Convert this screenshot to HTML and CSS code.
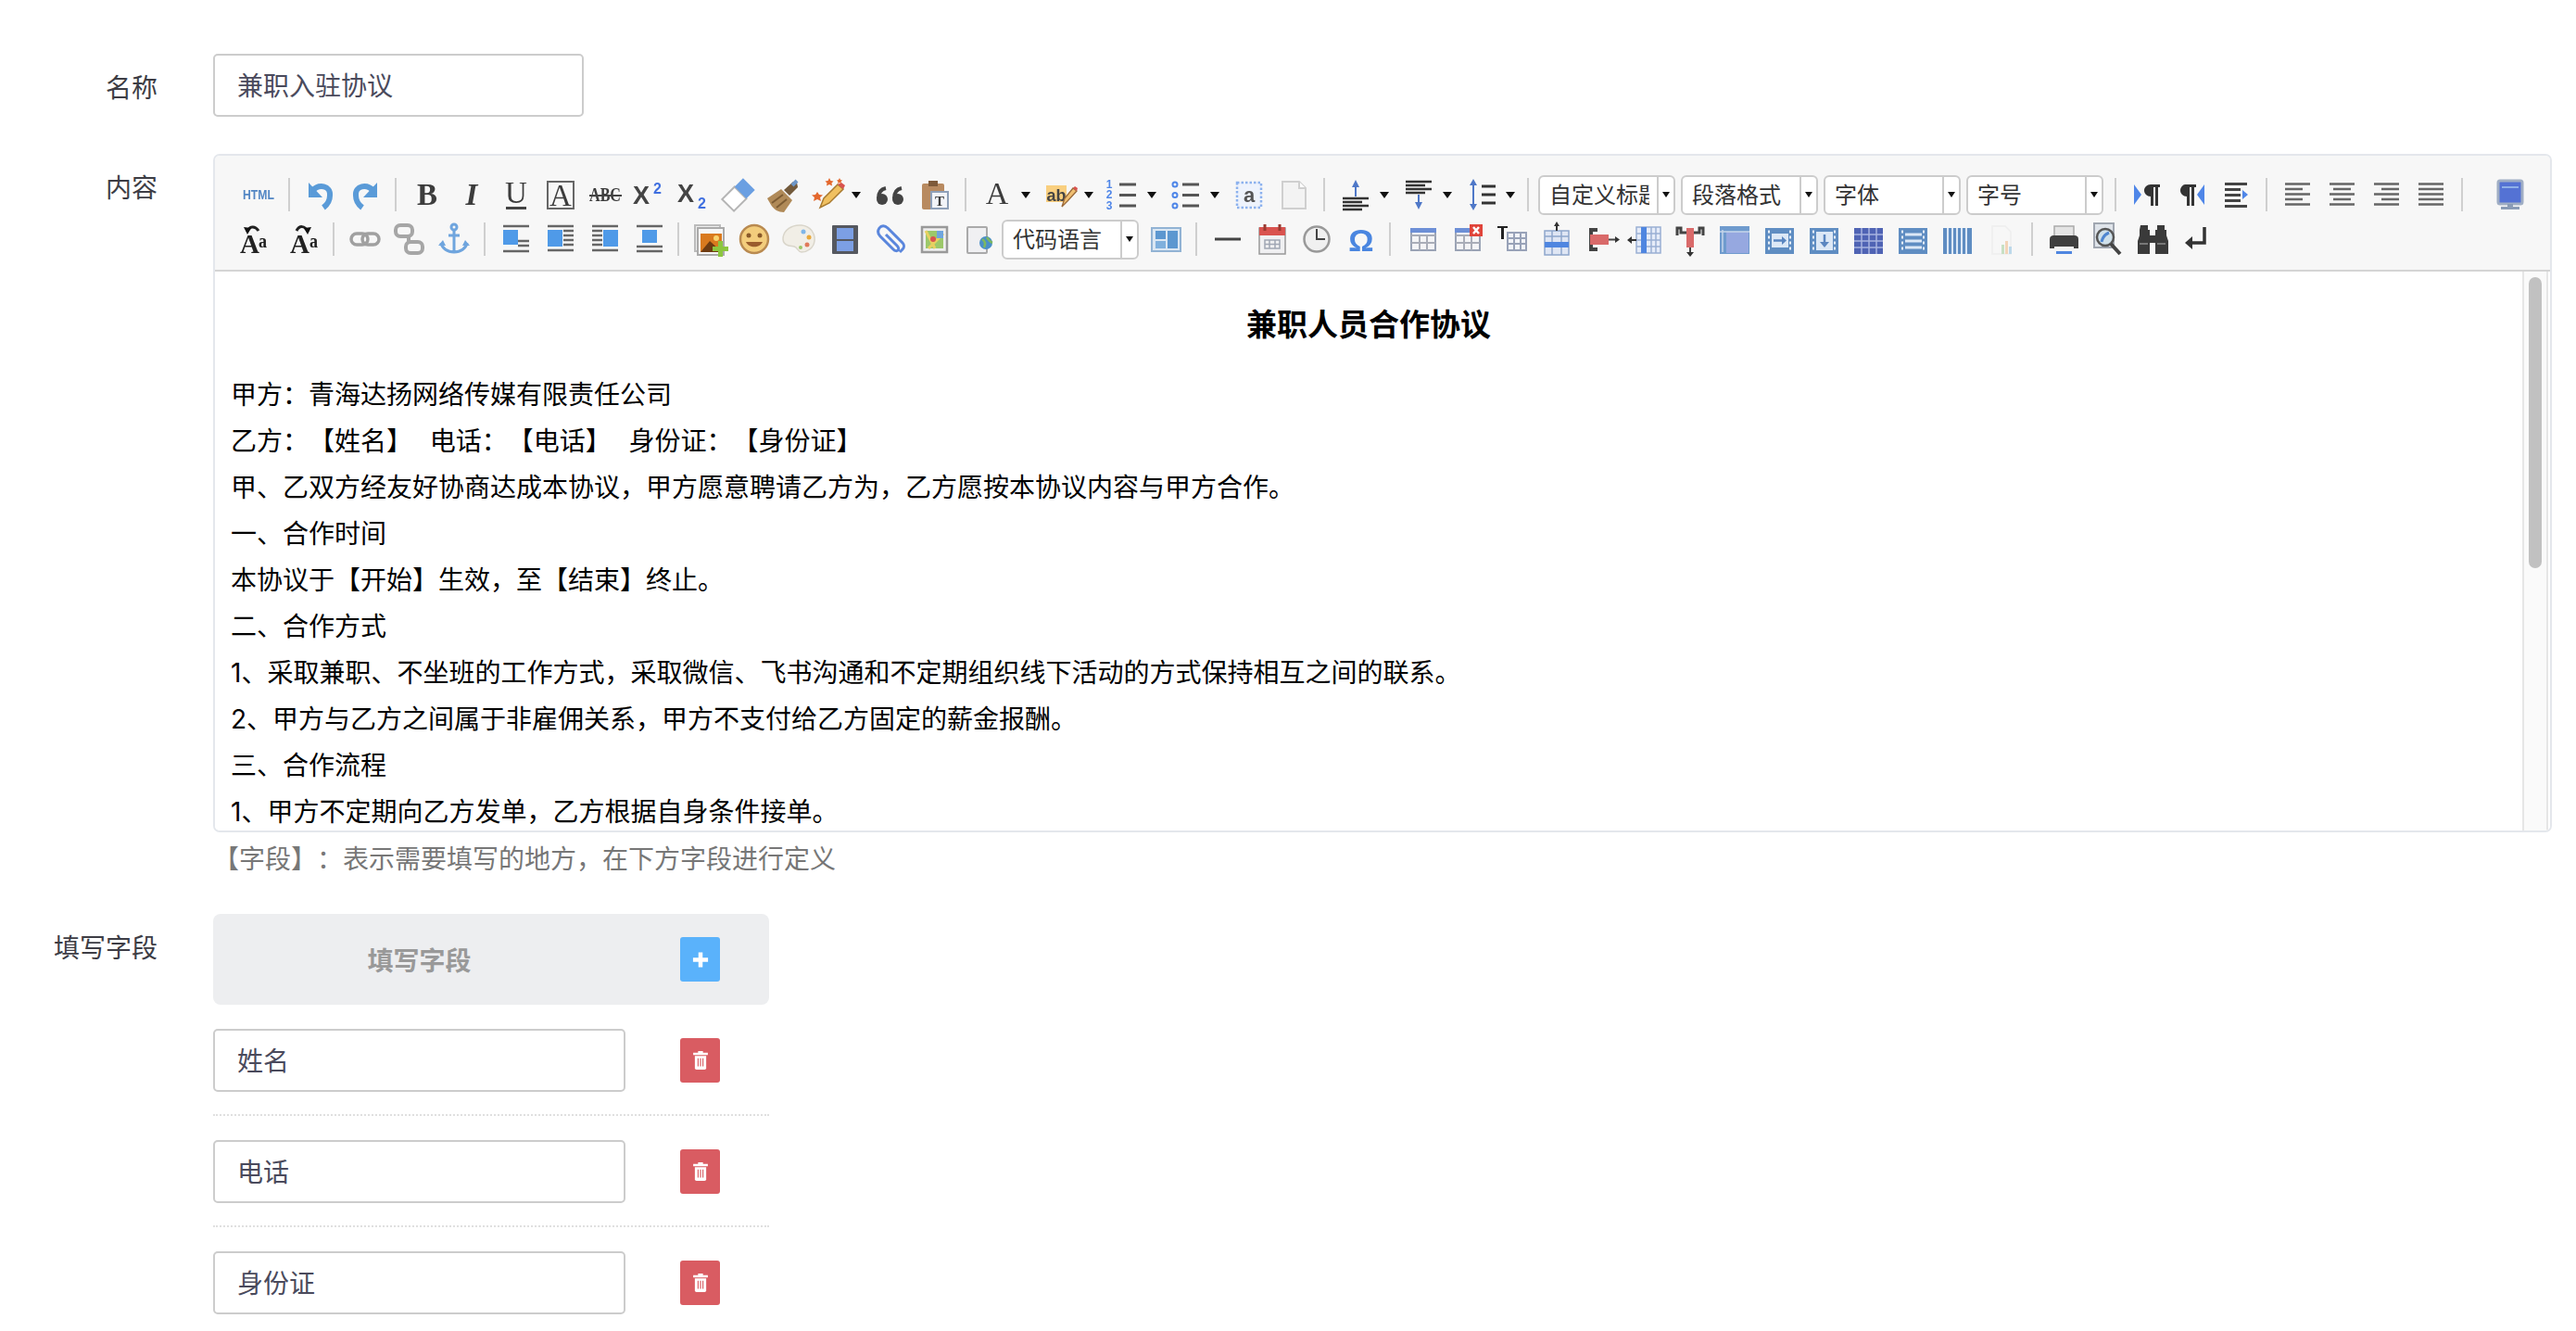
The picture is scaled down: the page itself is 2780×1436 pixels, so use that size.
FILE: index.html
```html
<!DOCTYPE html>
<html lang="zh-CN">
<head>
<meta charset="utf-8">
<title>兼职入驻协议</title>
<link rel="stylesheet" href="styles.css">
</head>
<body>
<svg class="defs" aria-hidden="true">
  <symbol id="grid" viewBox="0 0 48 48">
    <rect x="11" y="13" width="26" height="23" fill="#f4f4f6" stroke="#9aa3b5" stroke-width="2"/>
    <path d="M11 20h26M11 28h26M20 20v16M28 20v16" stroke="#a9adb8" stroke-width="2" fill="none"/>
    <rect x="10" y="12" width="28" height="5" fill="#6d8fd6"/>
  </symbol>
  <symbol id="frame" viewBox="0 0 48 48">
    <rect x="9" y="12" width="31" height="28" fill="#5f8dc2"/>
    <path d="M12 16h2M12 22h2M12 28h2M12 34h2M35 16h2M35 22h2M35 28h2M35 34h2" stroke="#e8f0f8" stroke-width="3"/>
  </symbol>
</svg>
<main class="form">
  <section class="field name-field">
    <div class="label">名称</div>
    <div class="control"><div class="input name-input">兼职入驻协议</div></div>
  </section>

  <section class="field editor-field">
    <div class="label">内容</div>
    <div class="control">
      <div class="editor">
        <div class="toolbar">
          <div class="row">
            <span class="b"><svg class="i" viewBox="0 0 48 48"><text x="7" y="29" class="t-html" textLength="34" lengthAdjust="spacingAndGlyphs">HTML</text></svg></span>
            <span class="s"></span>
            <span class="b"><svg class="i" viewBox="0 0 48 48"><path d="M15 20C22 12 35 14 34 25c0 5-3 10-7 13" fill="none" stroke="#5a9bd8" stroke-width="6"/><path d="M11 11v16h15z" fill="#5a9bd8"/></svg></span>
            <span class="b"><svg class="i" viewBox="0 0 48 48"><path d="M33 20C26 12 13 14 14 25c0 5 3 10 7 13" fill="none" stroke="#5a9bd8" stroke-width="6"/><path d="M37 11v16H22z" fill="#5a9bd8"/></svg></span>
            <span class="s"></span>
            <span class="b"><svg class="i" viewBox="0 0 48 48"><text x="24" y="35" class="t-serif bold fs30">B</text></svg></span>
            <span class="b"><svg class="i" viewBox="0 0 48 48"><text x="24" y="35" class="t-serif bold ital fs30">I</text></svg></span>
            <span class="b"><svg class="i" viewBox="0 0 48 48"><text x="24" y="33" class="t-serif fs30">U</text><rect x="13" y="37" width="22" height="3" fill="#444"/></svg></span>
            <span class="b"><svg class="i" viewBox="0 0 48 48"><rect x="10" y="10" width="28" height="29" fill="none" stroke="#666" stroke-width="2"/><text x="24" y="36" class="t-serif fs30">A</text></svg></span>
            <span class="b"><svg class="i" viewBox="0 0 48 48"><text x="24" y="31" class="t-serif bold fs21" textLength="34" lengthAdjust="spacingAndGlyphs">ABC</text><rect x="7" y="24" width="35" height="2" fill="#444"/></svg></span>
            <span class="b"><svg class="i" viewBox="0 0 48 48"><text x="6" y="34" class="t-x">X</text><text x="28" y="23" class="t-sup">2</text></svg></span>
            <span class="b"><svg class="i" viewBox="0 0 48 48"><text x="6" y="32" class="t-x">X</text><text x="28" y="39" class="t-sup">2</text></svg></span>
            <span class="b"><svg class="i" viewBox="0 0 48 48"><g transform="rotate(-45 24 24)"><rect x="8" y="15" width="19" height="18" fill="#fff" stroke="#b5b5b5" stroke-width="2"/><rect x="27" y="15" width="13" height="18" fill="#6a9fe2"/></g></svg></span>
            <span class="b"><svg class="i" viewBox="0 0 48 48"><path d="M7 28l15-10 12 12-9 13c-6 0-11-3-14-8z" fill="#b08a58"/><path d="M12 33l12-9M17 38l11-9" stroke="#7d5c33" stroke-width="2"/><path d="M25 19l6 6 9-9-1-5-4-1z" fill="#735a3c"/><path d="M34 14l5-5" stroke="#6d96c8" stroke-width="4"/></svg></span>
            <span class="b split"><svg class="i" viewBox="0 0 48 48"><path d="M16 38l4-10 15-15 6 5-15 15z" fill="#f0c060" stroke="#a87a30" stroke-width="1.5"/><path d="M35 13l6 5 2-4-4-3z" fill="#d9534f"/><path d="M13 21l2 3 4 .5-3 2.500 1 4-4-2-4 2 1-4-3-2.500 4-.5zM26 6l1.500 3 3 .5-2 2 .5 3-3-1.500-3 1.500.5-3-2-2 3-.5zM37 6l1 2 2 .5-1.500 1.500.5 2-2-1-2 1 .5-2L34 8.500l2-.5z" fill="#e4682e"/></svg><i class="caret"></i></span>
            <span class="b"><svg class="i" viewBox="0 0 48 48"><g fill="#444"><circle cx="15" cy="29" r="6"/><circle cx="32" cy="29" r="6"/></g><path d="M11 28c0-6 3-10 8-11M28 28c0-6 3-10 8-11" fill="none" stroke="#444" stroke-width="4"/></svg></span>
            <span class="b"><svg class="i" viewBox="0 0 48 48"><rect x="10" y="12" width="24" height="28" rx="2" fill="#b88a60"/><rect x="17" y="9" width="10" height="6" fill="#7e5a3a"/><rect x="20" y="21" width="18" height="18" fill="#f2f4f8" stroke="#8fa0b8" stroke-width="2"/><text x="29" y="36" class="t-serif bold fs15">T</text></svg></span>
            <span class="s"></span>
            <span class="b split"><svg class="i" viewBox="0 0 48 48"><text x="24" y="34" class="t-serif fs32">A</text></svg><i class="caret"></i></span>
            <span class="b split"><svg class="i" viewBox="0 0 48 48"><rect x="9" y="14" width="22" height="18" fill="#f9cf7f"/><text x="20" y="31" class="t-ab" textLength="21" lengthAdjust="spacingAndGlyphs">ab</text><path d="M26 37l3-9 9-11 4 3-10 11z" fill="#f0bf72" stroke="#9a6a3a" stroke-width="1.300"/><path d="M38 17l4 3 1-3-3-2z" fill="#d9534f"/></svg><i class="caret"></i></span>
            <span class="b split"><svg class="i" viewBox="0 0 48 48"><text x="9" y="17" class="t-num">1</text><text x="9" y="28" class="t-num">2</text><text x="9" y="40" class="t-num">3</text><path d="M20 13h18M20 24.500h18M20 36h18" stroke="#555" stroke-width="3"/></svg><i class="caret"></i></span>
            <span class="b split"><svg class="i" viewBox="0 0 48 48"><g fill="none" stroke="#4f86e8" stroke-width="2"><circle cx="12" cy="13" r="2.500"/><circle cx="12" cy="24.500" r="2.500"/><circle cx="12" cy="36" r="2.500"/></g><path d="M20 13h18M20 24.500h18M20 36h18" stroke="#555" stroke-width="3"/></svg><i class="caret"></i></span>
            <span class="b"><svg class="i" viewBox="0 0 48 48"><rect x="11" y="11" width="26" height="27" fill="#eef3fc" stroke="#8db2ee" stroke-width="2.500" stroke-dasharray="2.500 2"/><text x="24" y="32" class="t-a">a</text></svg></span>
            <span class="b"><svg class="i" viewBox="0 0 48 48"><path d="M12 10h18l7 7v22H12z" fill="#f3f3f3" stroke="#cfcfcf" stroke-width="2"/><path d="M30 10v7h7" fill="#fff" stroke="#cfcfcf" stroke-width="2"/></svg></span>
            <span class="s"></span>
            <span class="b split"><svg class="i" viewBox="0 0 48 48"><path d="M24 8l-4 8h3v10h2V16h3z" fill="#4f78c8"/><path d="M10 28h28M10 32h21M10 36h28M10 40h21" stroke="#333" stroke-width="2.500"/></svg><i class="caret"></i></span>
            <span class="b split"><svg class="i" viewBox="0 0 48 48"><path d="M10 10h28M10 14h21M10 18h28M10 22h21" stroke="#333" stroke-width="2.500"/><path d="M24 40l-4-8h3V24h2v8h3z" fill="#4f78c8"/></svg><i class="caret"></i></span>
            <span class="b split"><svg class="i" viewBox="0 0 48 48"><path d="M15 7l-4 7h3v10h2V14h3zM15 41l-4-7h3V24h2v10h3z" fill="#4f78c8"/><path d="M24 15h15M24 24h15M24 33h15" stroke="#333" stroke-width="3"/></svg><i class="caret"></i></span>
            <span class="s pull3"></span>
            <span class="sel first"><span class="sel-t">自定义标题</span><span class="sel-c"><i class="caret"></i></span></span>
            <span class="sel"><span class="sel-t">段落格式</span><span class="sel-c"><i class="caret"></i></span></span>
            <span class="sel"><span class="sel-t">字体</span><span class="sel-c"><i class="caret"></i></span></span>
            <span class="sel"><span class="sel-t">字号</span><span class="sel-c"><i class="caret"></i></span></span>
            <span class="s pull"></span>
            <span class="b"><svg class="i" viewBox="0 0 48 48"><path d="M10 13l8 11-8 11z" fill="#4f86e8"/><path d="M25 13h13v3h-2v20h-3V16h-2v20h-3V26c-4 0-7-3-7-6.500s3-6.500 7-6.500z" fill="#333"/></svg></span>
            <span class="b"><svg class="i" viewBox="0 0 48 48"><path d="M38 13l-8 11 8 11z" fill="#4f86e8"/><path d="M17 13h12v3h-2v20h-3V16h-2v20h-3V26c-4 0-7-3-7-6.500s3-6.500 5-6.500z" fill="#333"/></svg></span>
            <span class="b"><svg class="i" viewBox="0 0 48 48"><path d="M12 11h24v3H12zM12 17h17v3H12zM12 23h17v3H12zM12 29h17v3H12zM12 35h24v3H12z" fill="#444"/><path d="M31 19l6 5-6 5z" fill="#4f86e8"/></svg></span>
            <span class="s"></span>
            <span class="b"><svg class="i" viewBox="0 0 48 48"><path d="M10 12.500h27M10 18h19M10 23.500h27M10 29h19M10 34.500h27" class="al"/></svg></span>
            <span class="b"><svg class="i" viewBox="0 0 48 48"><path d="M10 12.500h27M14 18h19M10 23.500h27M14 29h19M10 34.500h27" class="al"/></svg></span>
            <span class="b"><svg class="i" viewBox="0 0 48 48"><path d="M10 12.500h27M18 18h19M10 23.500h27M18 29h19M10 34.500h27" class="al"/></svg></span>
            <span class="b"><svg class="i" viewBox="0 0 48 48"><path d="M10 12.500h27M10 18h27M10 23.500h27M10 29h27M10 34.500h27" class="al"/></svg></span>
            <span class="s"></span>
            <span class="b push"><svg class="i" viewBox="0 0 48 48"><rect x="11" y="9" width="26" height="25" rx="2" fill="#5472d4" stroke="#a0aec4" stroke-width="3"/><path d="M15 16h18" stroke="#8fb0e8" stroke-width="2"/><path d="M21 34h6v3h-6zM14 37h20v3H14z" fill="#8a9cb6"/></svg></span>
          </div>
          <div class="row">
            <span class="b"><svg class="i" viewBox="0 0 48 48"><text x="4" y="39" class="t-serif bold fs29 st">A</text><text x="24" y="33" class="t-serif bold fs18 st" textLength="9" lengthAdjust="spacingAndGlyphs">a</text><path d="M12 16c2-6 8-7 12-1" fill="none" stroke="#222" stroke-width="3"/><path d="M8 11l8 1-4 7z" fill="#111"/></svg></span>
            <span class="b"><svg class="i" viewBox="0 0 48 48"><text x="10" y="39" class="t-serif bold fs29 st">A</text><text x="31" y="33" class="t-serif bold fs18 st" textLength="9" lengthAdjust="spacingAndGlyphs">a</text><path d="M17 15c3-6 9-6 12 1" fill="none" stroke="#222" stroke-width="3"/><path d="M33 11l-8 1 4 7z" fill="#111"/></svg></span>
            <span class="s"></span>
            <span class="b"><svg class="i" viewBox="0 0 48 48"><g fill="none" stroke="#a0a0a0" stroke-width="3.500"><rect x="9" y="18" width="18" height="12" rx="6"/><rect x="21" y="18" width="18" height="12" rx="6"/></g></svg></span>
            <span class="b"><svg class="i" viewBox="0 0 48 48"><g fill="none" stroke="#a6a6a6" stroke-width="4"><rect x="9" y="9" width="18" height="12" rx="5"/><rect x="20" y="27" width="18" height="12" rx="5"/><path d="M23 21v6"/></g></svg></span>
            <span class="b"><svg class="i" viewBox="0 0 48 48"><g fill="none" stroke="#6fa5de" stroke-width="3"><circle cx="24" cy="11" r="3"/><path d="M24 14v24M18 20h12M10 28c1 6 7 10 14 10s13-4 14-10"/></g><path d="M7 31l5-6 3 6zM41 31l-5-6-3 6z" fill="#6fa5de"/></svg></span>
            <span class="s"></span>
            <span class="b"><svg class="i" viewBox="0 0 48 48"><path d="M10 10h28M26 26h12M26 31h12M10 37h28" class="ln"/><rect x="10" y="14" width="16" height="16" fill="#4f9ae8"/></svg></span>
            <span class="b"><svg class="i" viewBox="0 0 48 48"><path d="M10 10h28M27 15h11M27 20h11M27 25h11M27 30h11M10 36h28" class="ln"/><rect x="10" y="14" width="16" height="18" fill="#4f9ae8"/></svg></span>
            <span class="b"><svg class="i" viewBox="0 0 48 48"><path d="M10 10h28M10 15h11M10 20h11M10 25h11M10 30h11M10 36h28" class="ln"/><rect x="22" y="14" width="16" height="18" fill="#4f9ae8"/></svg></span>
            <span class="b"><svg class="i" viewBox="0 0 48 48"><path d="M10 10h28M10 32h28M10 37h28" class="ln"/><rect x="16" y="14" width="16" height="14" fill="#4f9ae8"/></svg></span>
            <span class="s pull"></span>
            <span class="b"><svg class="i" viewBox="0 0 48 48"><rect x="8" y="9" width="27" height="28" fill="#eee" stroke="#bbb" stroke-width="2"/><rect x="11" y="12" width="28" height="29" fill="#f6f6f6" stroke="#aaa" stroke-width="2"/><rect x="14" y="18" width="23" height="20" fill="#d97a1e"/><path d="M14 38l10-12 13 12z" fill="#6e3c12"/><circle cx="31" cy="23" r="3" fill="#f8d36e"/><path d="M36 28h5v6h6v5h-6v6h-5v-6h-6v-5h6z" fill="#8cc63f" transform="translate(-3 -2)"/></svg></span>
            <span class="b"><svg class="i" viewBox="0 0 48 48"><circle cx="24" cy="24" r="15" fill="#f3cd7c" stroke="#b98a50" stroke-width="2.500"/><circle cx="18" cy="20" r="2.500" fill="#8a5a2a"/><circle cx="30" cy="20" r="2.500" fill="#8a5a2a"/><path d="M15 27c3 7 15 7 18 0z" fill="#9a5c2c"/></svg></span>
            <span class="b"><svg class="i" viewBox="0 0 48 48"><path d="M7 24c0-10 10-16 20-15s15 9 14 17-8 12-14 12c-3 0-4-3-6-5s-5-1-8-2-6-3-6-7z" fill="#f1eee6" stroke="#d9d5ca" stroke-width="1.500"/><circle cx="29" cy="16" r="2.500" fill="#7fb6e8"/><circle cx="35" cy="22" r="2.500" fill="#e9a83a"/><circle cx="33" cy="30" r="2.500" fill="#e07a5a"/><circle cx="26" cy="33" r="2" fill="#9cc86a"/></svg></span>
            <span class="b gap2"><svg class="i" viewBox="0 0 48 48"><rect x="10" y="9" width="28" height="31" rx="1" fill="#55585f"/><rect x="15" y="12" width="18" height="12" fill="#7c9fe4"/><rect x="15" y="26" width="18" height="11" fill="#7c9fe4"/></svg></span>
            <span class="b"><svg class="i" viewBox="0 0 48 48"><path d="M35 38l3-3c2-2 2-5 0-7L22 12c-3-3-7-3-9 0s-2 6 1 9l14 14c2 2 4 2 5 1s1-3-1-5L20 19" fill="none" stroke="#5a86dc" stroke-width="3"/></svg></span>
            <span class="b"><svg class="i" viewBox="0 0 48 48"><rect x="11" y="11" width="27" height="27" fill="#eee" stroke="#999" stroke-width="2.500"/><rect x="15" y="15" width="19" height="19" fill="#9cc86a"/><path d="M15 15l10 19M34 18L18 34" stroke="#e8d060" stroke-width="3"/><rect x="27" y="15" width="7" height="8" fill="#6fa5de"/><circle cx="23" cy="24" r="3" fill="#d9534f"/></svg></span>
            <span class="b"><svg class="i" viewBox="0 0 48 48"><rect x="12" y="11" width="21" height="28" rx="1" fill="#f0f0f2" stroke="#aaa" stroke-width="2"/><circle cx="32" cy="28" r="7" fill="#4a8fc8"/><path d="M28 24c3 2 4 5 2 9M33 22c2 3 3 5 6 6" stroke="#7cb860" stroke-width="2.500" fill="none"/></svg></span>
            <span class="sel code"><span class="sel-t">代码语言</span><span class="sel-c"><i class="caret"></i></span></span>
            <span class="b gap5"><svg class="i" viewBox="0 0 48 48"><rect x="9" y="12" width="31" height="25" fill="#dbe7f3" stroke="#92b3d4" stroke-width="2"/><rect x="13" y="15" width="11" height="9" fill="#5c97d0"/><rect x="13" y="26" width="11" height="8" fill="#7fb0dd"/><rect x="26" y="15" width="11" height="19" fill="#5c97d0"/></svg></span>
            <span class="s"></span>
            <span class="b"><svg class="i" viewBox="0 0 48 48"><path d="M10 24h28" stroke="#444" stroke-width="3"/></svg></span>
            <span class="b"><svg class="i" viewBox="0 0 48 48"><rect x="10" y="12" width="28" height="28" fill="#f0f0f2" stroke="#999" stroke-width="1.500"/><rect x="10" y="11" width="28" height="9" fill="#d9534f"/><path d="M16 8v7M32 8v7" stroke="#9a3a30" stroke-width="3"/><path d="M16 25h16v9H16zM16 29.500h16M21 25v9M27 25v9" stroke="#a0a6b4" stroke-width="1.500" fill="none"/></svg></span>
            <span class="b"><svg class="i" viewBox="0 0 48 48"><circle cx="24" cy="24" r="13.500" fill="#f0f0f0" stroke="#999" stroke-width="2.500"/><path d="M24 13v11h9" fill="none" stroke="#444" stroke-width="2"/></svg></span>
            <span class="b"><svg class="i" viewBox="0 0 48 48"><text x="24" y="37" class="t-omega">Ω</text></svg></span>
            <span class="s pull"></span>
            <span class="b gap2"><svg class="i" viewBox="0 0 48 48"><use href="#grid"/></svg></span>
            <span class="b"><svg class="i" viewBox="0 0 48 48"><use href="#grid"/><rect x="26" y="8" width="14" height="13" fill="#e0443a"/><path d="M30 11l6 7M36 11l-6 7" stroke="#fff" stroke-width="2.500"/></svg></span>
            <span class="b"><svg class="i" viewBox="0 0 48 48"><path d="M8 10h11v2h-4v12h-3V12H8z" fill="#222"/><path d="M19 17h20v19H19zM19 23h20M19 29h20M26 17v19M33 17v19" fill="#f2f4f8" stroke="#98a2b8" stroke-width="2"/></svg></span>
            <span class="b"><svg class="i" viewBox="0 0 48 48"><rect x="11" y="15" width="26" height="26" fill="#dfe6f4" stroke="#8fa6cc" stroke-width="1.500"/><path d="M11 21h26M19 15v26M29 15v26" stroke="#8fa6cc" stroke-width="1.500"/><rect x="11" y="27" width="26" height="6" fill="#4f86e0"/><path d="M24 5l-3 5h2v5h2v-5h2z" fill="#333"/></svg></span>
            <span class="b"><svg class="i" viewBox="0 0 48 48"><path d="M10 12h9v4h-5v17h5v4h-9z" fill="#444" transform="translate(1 0)"/><rect x="12" y="19" width="20" height="11" fill="#d96a6a"/><path d="M32 24.500h8" stroke="#444" stroke-width="2"/><path d="M39 21l5 3.500-5 3.500z" fill="#333"/></svg></span>
            <span class="b"><svg class="i" viewBox="0 0 48 48"><rect x="14" y="11" width="26" height="28" fill="#e6ecf8" stroke="#9ab0d4" stroke-width="1.500"/><path d="M30 11v28M35 11v28M14 18h26M14 25h26M14 32h26" stroke="#9ab0d4" stroke-width="1.500"/><rect x="19" y="11" width="6" height="28" fill="#4f86e0"/><path d="M5 25h9" stroke="#333" stroke-width="2"/><path d="M9 21l-5 4 5 4z" fill="#333"/></svg></span>
            <span class="b"><svg class="i" viewBox="0 0 48 48"><path d="M10 20V12h4v5h6M38 20V12h-4v5h-6" fill="none" stroke="#444" stroke-width="3"/><rect x="20" y="12" width="8" height="21" fill="#d96a6a"/><path d="M24 33v7" stroke="#444" stroke-width="2"/><path d="M20 38l4 5 4-5z" fill="#333"/></svg></span>
            <span class="b"><svg class="i" viewBox="0 0 48 48"><rect x="8" y="10" width="32" height="30" fill="#6f9bce"/><rect x="15" y="16" width="24" height="23" fill="#96a8e0"/><path d="M11 14v24M8 16h32" stroke="#c6d6ea" stroke-width="1.500"/></svg></span>
            <span class="b"><svg class="i" viewBox="0 0 48 48"><use href="#frame"/><rect x="16" y="18" width="18" height="15" fill="#dce8f6"/><path d="M18 25.500h10" stroke="#5a86c0" stroke-width="2.500"/><path d="M27 21l5 4.500-5 4.500z" fill="#5a86c0"/></svg></span>
            <span class="b"><svg class="i" viewBox="0 0 48 48"><use href="#frame"/><rect x="16" y="16" width="18" height="20" fill="#dce8f6"/><path d="M25 19v9" stroke="#5a86c0" stroke-width="2.500"/><path d="M20 27l5 6 5-6z" fill="#5a86c0"/></svg></span>
            <span class="b"><svg class="i" viewBox="0 0 48 48"><rect x="9" y="12" width="31" height="28" fill="#4f63b4"/><path d="M9 19h31M9 26h31M9 33h31M17 12v28M25 12v28M33 12v28" stroke="#a8b4e0" stroke-width="1.500"/></svg></span>
            <span class="b"><svg class="i" viewBox="0 0 48 48"><use href="#frame"/><path d="M16 19h18M16 26h18M16 33h18" stroke="#dce8f6" stroke-width="3"/></svg></span>
            <span class="b"><svg class="i" viewBox="0 0 48 48"><rect x="9" y="12" width="31" height="28" fill="#5f8dc2"/><path d="M14 12v28M19 12v28M24 12v28M29 12v28M34 12v28" stroke="#dce8f6" stroke-width="2"/></svg></span>
            <span class="b"><svg class="i" viewBox="0 0 48 48"><path d="M14 10h14l6 6v24H14z" fill="#f7f7f7" stroke="#eee" stroke-width="1.500"/><rect x="24" y="30" width="3" height="10" fill="#c8e0c4"/><rect x="28" y="26" width="3" height="14" fill="#f2d4b8"/><rect x="32" y="32" width="3" height="8" fill="#bcd8ea"/></svg></span>
            <span class="s"></span>
            <span class="b"><svg class="i" viewBox="0 0 48 48"><rect x="14" y="10" width="21" height="14" fill="#e4e4e4" stroke="#aaa" stroke-width="1.500"/><path d="M9 24c0-3 2-4 4-4h23c2 0 4 1 4 4v10H9z" fill="#3f3f3f"/><rect x="14" y="32" width="21" height="8" fill="#f4f4f4"/><rect x="16" y="37" width="17" height="3" fill="#4f86e0"/></svg></span>
            <span class="b"><svg class="i" viewBox="0 0 48 48"><rect x="9" y="7" width="21" height="26" fill="#dfe4ea" stroke="#a0a6b0" stroke-width="2"/><circle cx="21" cy="22" r="9" fill="#cfe0ea" stroke="#555" stroke-width="2.500"/><path d="M17 27c1-5 3-8 8-10" stroke="#4f86d0" stroke-width="3" fill="none"/><path d="M27 29l10 11" stroke="#444" stroke-width="4"/></svg></span>
            <span class="b"><svg class="i" viewBox="0 0 48 48"><path d="M11 9h8v5h2v6h6v-6h2V9h8v5h2v6l2 6v14H27V28h-6v12H8V26l2-6v-6z" fill="#3a3a3a"/><path d="M10 29h9M29 29h9" stroke="#777" stroke-width="2"/></svg></span>
            <span class="b"><svg class="i" viewBox="0 0 48 48"><path d="M32 11v17H17" fill="none" stroke="#333" stroke-width="3.500"/><path d="M19 21l-8 7 8 7z" fill="#333"/></svg></span>
          </div>
        </div>
        <div class="frame">
          <div class="doc">
            <h1 class="doc-title">兼职人员合作协议</h1>
            <p>甲方：青海达扬网络传媒有限责任公司</p>
            <p>乙方：【姓名】&nbsp;&nbsp;电话：【电话】&nbsp;&nbsp;身份证：【身份证】</p>
            <p>甲、乙双方经友好协商达成本协议，甲方愿意聘请乙方为，乙方愿按本协议内容与甲方合作。</p>
            <p>一、合作时间</p>
            <p>本协议于【开始】生效，至【结束】终止。</p>
            <p>二、合作方式</p>
            <p>1、采取兼职、不坐班的工作方式，采取微信、飞书沟通和不定期组织线下活动的方式保持相互之间的联系。</p>
            <p>2、甲方与乙方之间属于非雇佣关系，甲方不支付给乙方固定的薪金报酬。</p>
            <p>三、合作流程</p>
            <p>1、甲方不定期向乙方发单，乙方根据自身条件接单。</p>
          </div>
          <div class="scroll"><div class="thumb"></div></div>
        </div>
      </div>
      <div class="hint">【字段】：表示需要填写的地方，在下方字段进行定义</div>
    </div>
  </section>

  <section class="field">
    <div class="label">填写字段</div>
    <div class="control">
      <div class="fields">
        <div class="f-head">
          <div class="f-title">填写字段</div>
          <div class="f-act"><span class="btn add"><svg class="btn-i" viewBox="0 0 20 20"><path d="M10 1v18M1 10h18" stroke="#fff" stroke-width="5"/></svg></span></div>
        </div>
        <div class="f-row">
          <div class="input">姓名</div>
          <div class="f-act"><span class="btn del"><svg class="btn-i" viewBox="0 0 20 24"><path d="M7 3V1h6v2h6v3H1V3z" fill="#fff"/><path d="M3 7h14v15a2 2 0 0 1-2 2H5a2 2 0 0 1-2-2z" fill="#fff"/><path d="M7 10v10M10 10v10M13 10v10" stroke="#d95c62" stroke-width="1.300"/></svg></span></div>
        </div>
        <div class="f-row">
          <div class="input">电话</div>
          <div class="f-act"><span class="btn del"><svg class="btn-i" viewBox="0 0 20 24"><path d="M7 3V1h6v2h6v3H1V3z" fill="#fff"/><path d="M3 7h14v15a2 2 0 0 1-2 2H5a2 2 0 0 1-2-2z" fill="#fff"/><path d="M7 10v10M10 10v10M13 10v10" stroke="#d95c62" stroke-width="1.300"/></svg></span></div>
        </div>
        <div class="f-row">
          <div class="input">身份证</div>
          <div class="f-act"><span class="btn del"><svg class="btn-i" viewBox="0 0 20 24"><path d="M7 3V1h6v2h6v3H1V3z" fill="#fff"/><path d="M3 7h14v15a2 2 0 0 1-2 2H5a2 2 0 0 1-2-2z" fill="#fff"/><path d="M7 10v10M10 10v10M13 10v10" stroke="#d95c62" stroke-width="1.300"/></svg></span></div>
        </div>
      </div>
    </div>
  </section>
</main>
</body>
</html>
```
FILE: styles.css
```css
* { box-sizing: border-box; }
html, body { margin: 0; padding: 0; background: #fff; }
body {
  font-family: "Liberation Sans", "Noto Sans CJK SC", sans-serif;
  font-size: 28px;
  color: #333;
  height: 1436px;
  overflow: hidden;
  text-spacing-trim: space-all;
}
.defs { position: absolute; width: 0; height: 0; }
.form { padding: 58px 26px 0 0; }
.field { display: grid; grid-template-columns: 170px 1fr; column-gap: 60px; margin-bottom: 40px; }
.label { text-align: right; line-height: 44px; padding-top: 16px; color: #3d3d45; white-space: nowrap; }
.control { min-width: 0; }

.input {
  height: 68px;
  line-height: 68px;
  width: 445px;
  padding-left: 24px;
  border: 2px solid #ccc;
  border-radius: 5px;
  color: #4a4a5c;
  background: #fff;
  flex: none;
}
.name-input { width: 400px; }

.editor {
  height: 732px;
  border: 2px solid #e4e7ec;
  border-radius: 7px;
  display: flex;
  flex-direction: column;
  overflow: hidden;
}
.toolbar { background: #f7f7f7; padding: 18px 0 9px 23px; border-bottom: 2px solid #d4d4d4; flex: none; }
.row { display: flex; align-items: center; height: 48px; }
.b { display: flex; align-items: center; flex: none; width: 48px; height: 48px; }
.split { width: 68px; }
.i { width: 48px; height: 48px; flex: none; filter: blur(0.6px); overflow: visible; }
.caret {
  display: block;
  flex: none;
  width: 0;
  height: 0;
  margin-left: 2px;
  border-left: 5px solid transparent;
  border-right: 5px solid transparent;
  border-top: 7px solid #111;
}
.s { display: block; flex: none; width: 19px; height: 36px; }
.s::before { content: ""; display: block; margin-left: 8px; width: 2px; height: 36px; background: #cfcfcf; }
.pull { margin-left: -2px; }
.pull3 { margin-left: -3px; }
.push { margin-left: 18px; }
.gap2 { margin-left: 2px; }
.gap5 { margin-left: 5px; }

.sel {
  display: flex;
  flex: none;
  width: 148px;
  height: 43px;
  margin-right: 6px;
  background: #fff;
  border: 2px solid #ccc;
  border-radius: 6px;
  font-size: 24px;
  line-height: 39px;
  color: #333;
}
.sel.first { margin-left: 1px; }
.sel.code { margin: 0 0 0 1px; }
.sel-t { flex: 1; min-width: 0; margin: 0 8px 0 10px; overflow: hidden; white-space: nowrap; }
.sel-c { flex: none; width: 18px; border-left: 2px solid #ccc; display: flex; align-items: center; justify-content: center; }
.sel-c .caret { margin: 0; border-left-width: 4px; border-right-width: 4px; border-top-width: 6px; }

.t-html { font: 700 15px "Liberation Sans", sans-serif; fill: #5286c4; }
.t-serif { font-family: "Liberation Serif", serif; fill: #3c3c3c; text-anchor: middle; }
.bold { font-weight: 700; }
.ital { font-style: italic; }
.fs15 { font-size: 15px; }
.fs18 { font-size: 20px; }
.fs21 { font-size: 21px; }
.fs29 { font-size: 29px; }
.fs30 { font-size: 33px; }
.fs32 { font-size: 34px; }
.st { text-anchor: start; fill: #222; }
.t-x { font: 700 27px "Liberation Sans", sans-serif; fill: #444; }
.t-sup { font: 700 16px "Liberation Sans", sans-serif; fill: #3f6fe0; }
.t-ab { font: 700 19px "Liberation Sans", sans-serif; fill: #444; text-anchor: middle; }
.t-num { font: 700 12px "Liberation Sans", sans-serif; fill: #4f86e8; text-anchor: middle; }
.t-a { font: 700 22px "Liberation Sans", sans-serif; fill: #555; text-anchor: middle; }
.t-omega { font: 700 34px "Liberation Sans", sans-serif; fill: #4a86e0; text-anchor: middle; }
.al { stroke: #666; stroke-width: 2.6; fill: none; }
.ln { stroke: #666; stroke-width: 2.6; fill: none; }

.frame { flex: 1; min-height: 0; display: flex; overflow: hidden; background: #fff; }
.doc { flex: 1; min-width: 0; padding: 32px 17px 0; color: #000; overflow: hidden; font-family: Inter, "Noto Sans CJK SC", sans-serif; word-spacing: 1.5px; }
.doc-title { margin: 0 0 26px; font-size: 33px; line-height: 50px; font-weight: 700; text-align: center; }
.doc p { margin: 0; line-height: 50px; white-space: nowrap; }
.scroll {
  flex: none;
  width: 28px;
  margin-right: 2px;
  padding: 6px 5px 0;
  background: #fafafa;
  border-left: 2px solid #e6e6e6;
  border-right: 2px solid #e6e6e6;
}
.thumb { height: 314px; background: #c1c1c1; border-radius: 7px; }
.hint { margin-top: 12px; font-size: 28px; line-height: 36px; color: #777; }

.fields { width: 600px; }
.f-head {
  display: flex;
  align-items: center;
  height: 98px;
  background: #edeef0;
  border-radius: 8px;
}
.f-title { width: 445px; text-align: center; font-weight: 700; color: #999; }
.f-act { flex: 1; display: flex; justify-content: center; padding-left: 6px; }
.btn { display: flex; align-items: center; justify-content: center; width: 43px; height: 48px; border-radius: 3px; }
.add { background: #5ab2fb; }
.del { background: #d95c62; }
.btn-i { display: block; width: 18px; height: 21px; }
.f-row {
  display: flex;
  align-items: center;
  height: 120px;
  padding-top: 1px;
  border-bottom: 2px dotted #e0e0e0;
}
.f-row:last-child { border-bottom-color: transparent; }
```
